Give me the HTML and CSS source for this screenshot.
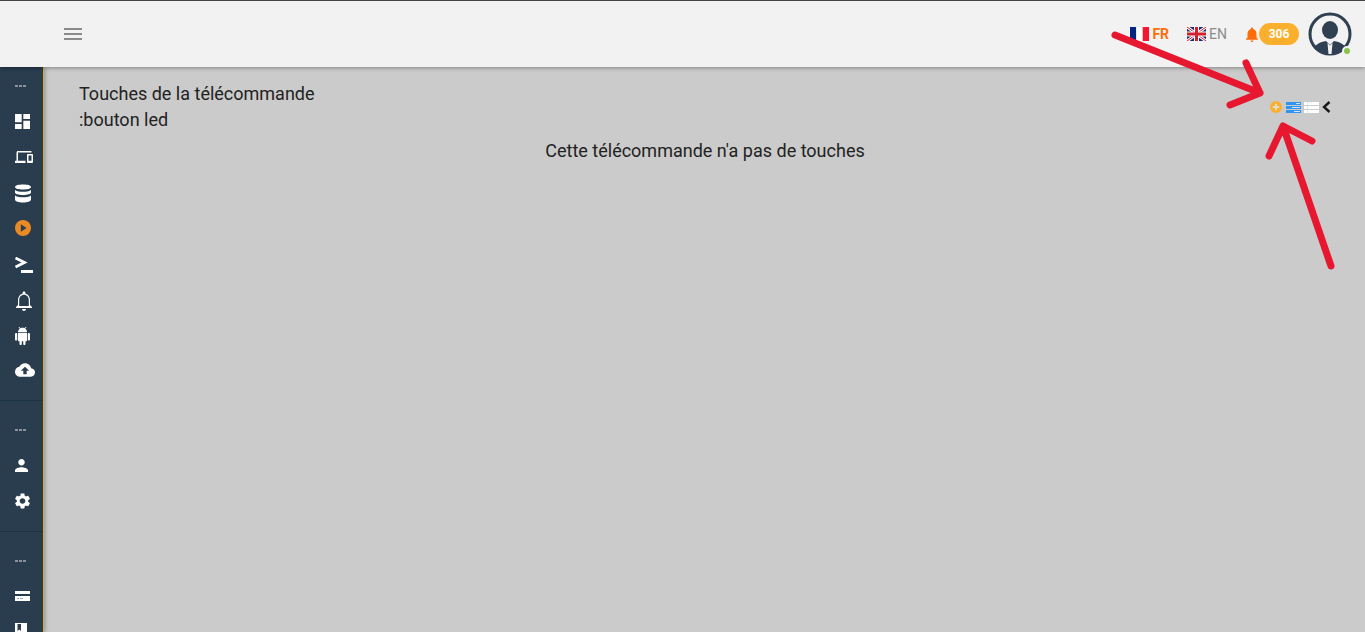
FILE: index.html
```html
<!DOCTYPE html>
<html lang="fr">
<head>
    <meta charset="UTF-8">
    <title>Touches de la télécommande</title>
    <link rel="stylesheet" href="styles.css">
</head>
<body>
    <header class="topbar">
        <svg class="burger" viewBox="0 0 18 12"><path d="M0 0h18v2H0zM0 5h18v2H0zM0 10h18v2H0z"/></svg>
        <div class="topbar-right">
            <a class="lang lang-active">
                <svg class="flag" viewBox="0 0 19 14"><rect width="6.3" height="14" fill="#00267f"/><rect x="6.3" width="6.4" height="14" fill="#fff"/><rect x="12.7" width="6.3" height="14" fill="#f31830"/></svg>
                FR
            </a>
            <a class="lang">
                <svg class="flag" viewBox="0 0 19 14"><rect width="19" height="14" fill="#1f2a6b"/><path d="M0 0l19 14M19 0L0 14" stroke="#fff" stroke-width="3"/><path d="M0 0l19 14M19 0L0 14" stroke="#d2202f" stroke-width="1"/><path d="M9.5 0v14M0 7h19" stroke="#fff" stroke-width="5"/><path d="M9.5 0v14M0 7h19" stroke="#d2202f" stroke-width="3"/></svg>
                EN
            </a>
            <div class="notif">
                <svg class="notif-bell" viewBox="4 2 16 20"><path d="M12 22c1.1 0 2-.9 2-2h-4c0 1.1.9 2 2 2zm6-6v-5c0-3.07-1.63-5.64-4.5-6.32V4c0-.83-.67-1.5-1.5-1.5s-1.5.67-1.5 1.5v.68C7.64 5.36 6 7.92 6 11v5l-2 2v1h16v-1l-2-2z"/></svg>
                <span class="badge">306</span>
            </div>
            <div class="avatar">
                <svg viewBox="0 0 44 44">
                    <circle cx="22" cy="22" r="20" fill="none" stroke="#2f4052" stroke-width="3"/>
                    <ellipse cx="22" cy="18" rx="8" ry="9" fill="#2f4052"/>
                    <path d="M6 36c1-3 6-6 12-7l4 4 4-4c6 1 11 4 12 7-4 4-10 7-16 7S10 40 6 36z" fill="#2f4052"/>
                    <path d="M19.500 31l2.500 2.500 2.500-2.500-1 11h-3z" fill="#f2f2f2"/>
                </svg>
                <span class="online"></span>
            </div>
        </div>
    </header>

    <div class="layout">
        <nav class="sidebar">
            <div class="side-group">
                <div class="side-item side-item-dots"><span class="dots"></span></div>
                <div class="side-item"><svg class="ico ico-15" viewBox="3 3 18 18"><path d="M3 13h8V3H3v10zm0 8h8v-6H3v6zm10 0h8V11h-8v10zm0-18v6h8V3h-8z"/></svg></div>
                <div class="side-item"><svg class="ico ico-18" viewBox="0 0 24 24"><path d="M4 6h18V4H4c-1.1 0-2 .9-2 2v11H0v3h14v-3H4V6zm19 2h-6c-.55 0-1 .45-1 1v10c0 .55.45 1 1 1h6c.55 0 1-.45 1-1V9c0-.55-.45-1-1-1zm-1 9h-4v-7h4v7z"/></svg></div>
                <div class="side-item"><svg class="ico ico-db" viewBox="1 0.500 16 19"><path d="M1 3.500C1 1.800 4.600 1 9 1s8 .8 8 2.500S13.400 6 9 6 1 5.200 1 3.500zM1 6.500C3 8 6 8.300 9 8.300s6-.3 8-1.800V9c0 1.500-3.600 2.500-8 2.500S1 10.500 1 9zM1 12c2 1.500 5 1.800 8 1.800s6-.3 8-1.800v4c0 1.800-3.600 3-8 3s-8-1.200-8-3z"/></svg></div>
                <div class="side-item side-item-play"><svg class="ico-16" viewBox="0 0 16 16"><circle cx="8" cy="8" r="8" fill="#e98a24"/><path d="M5.800 4.300L11.600 8l-5.800 3.700z" fill="#293d4f"/></svg></div>
                <div class="side-item"><svg class="ico ico-term" viewBox="0 0 18 16"><path d="M0.500 1l9 4.500-9 4.500" fill="none" stroke="#fff" stroke-width="2.800"/><path d="M6 13h12v3H6z"/></svg></div>
                <div class="side-item"><svg class="ico ico-bell" viewBox="4 2 16 20"><path d="M12 22c1.100 0 2-.9 2-2h-4c0 1.100.9 2 2 2zm6-6v-5c0-3.070-1.630-5.640-4.500-6.320V4c0-.83-.67-1.500-1.500-1.500s-1.500.67-1.500 1.500v.68C7.640 5.360 6 7.920 6 11v5l-2 2v1h16v-1l-2-2zm-1.200 1.100H7.200V11c0-2.900 1.900-5.300 4.800-5.300s4.800 2.400 4.800 5.300v6.100z"/></svg></div>
                <div class="side-item side-item-tight"><svg class="ico ico-droid" viewBox="2 0 20 24"><path d="M6 18c0 .55.45 1 1 1h1v3.500c0 .83.67 1.500 1.500 1.500s1.500-.67 1.500-1.500V19h2v3.500c0 .83.67 1.500 1.500 1.500s1.500-.67 1.500-1.500V19h1c.55 0 1-.45 1-1V8H6v10zM3.500 8C2.670 8 2 8.670 2 9.500v7c0 .83.67 1.500 1.500 1.500S5 17.330 5 16.500v-7C5 8.670 4.330 8 3.500 8zm17 0c-.83 0-1.500.67-1.500 1.500v7c0 .83.67 1.500 1.500 1.500s1.500-.67 1.500-1.500v-7c0-.83-.67-1.500-1.500-1.500zm-4.970-5.840l1.300-1.300c.2-.2.2-.51 0-.71-.2-.2-.51-.2-.71 0l-1.480 1.480C13.850 1.230 12.950 1 12 1c-.96 0-1.860.23-2.660.63L7.850.15c-.2-.2-.51-.2-.71 0-.2.2-.2.51 0 .71l1.310 1.310C6.970 3.260 6 5.010 6 7h12c0-1.990-.97-3.750-2.470-4.840z"/></svg></div>
                <div class="side-item side-item-tight"><svg class="ico ico-20" viewBox="0 0 24 24"><path d="M19.350 10.040C18.670 6.590 15.640 4 12 4 9.110 4 6.600 5.640 5.350 8.040 2.340 8.360 0 10.910 0 14c0 3.310 2.690 6 6 6h13c2.760 0 5-2.240 5-5 0-2.640-2.050-4.780-4.650-4.960zM14 13v4h-4v-4H7l5-5 5 5h-3z"/></svg></div>
            </div>
            <div class="side-group">
                <div class="side-item side-item-dots"><span class="dots"></span></div>
                <div class="side-item"><svg class="ico ico-13" viewBox="4 4 16 16"><path d="M12 12c2.210 0 4-1.790 4-4s-1.790-4-4-4-4 1.790-4 4 1.790 4 4 4zm0 2c-2.670 0-8 1.340-8 4v2h16v-2c0-2.660-5.330-4-8-4z"/></svg></div>
                <div class="side-item"><svg class="ico ico-gear" viewBox="2.500 2 19 20"><path d="M19.140 12.940c.04-.3.06-.61.06-.94 0-.32-.02-.64-.07-.94l2.030-1.580c.18-.14.23-.41.12-.61l-1.920-3.320c-.12-.22-.37-.29-.59-.22l-2.390.96c-.5-.38-1.030-.7-1.620-.94l-.36-2.540c-.04-.24-.24-.41-.48-.41h-3.840c-.24 0-.43.17-.47.41l-.36 2.540c-.59.24-1.130.57-1.620.94l-2.390-.96c-.22-.08-.47 0-.59.22L2.740 8.870c-.12.21-.08.47.12.61l2.030 1.580c-.05.3-.09.63-.09.94s.02.64.07.94l-2.030 1.580c-.18.14-.23.41-.12.61l1.920 3.320c.12.22.37.29.59.22l2.390-.96c.5.38 1.030.7 1.620.94l.36 2.540c.05.24.24.41.48.41h3.840c.24 0 .44-.17.47-.41l.36-2.540c.59-.24 1.130-.56 1.620-.94l2.390.96c.22.08.47 0 .59-.22l1.920-3.320c.12-.22.07-.47-.12-.61l-2.010-1.580zM12 15.600c-1.980 0-3.600-1.620-3.600-3.600s1.620-3.600 3.600-3.600 3.600 1.620 3.600 3.600-1.620 3.600-3.600 3.600z"/></svg></div>
            </div>
            <div class="side-group">
                <div class="side-item side-item-dots"><span class="dots"></span></div>
                <div class="side-item"><svg class="ico ico-card" viewBox="0 0 15 10"><path d="M0 0h15v3H0z"/><path d="M0 5h15v5H0z"/><path d="M2 7h2v1H2zM5 7h3v1H5z" fill="#9aa5af"/></svg></div>
                <div class="side-item side-item-book"><svg class="ico ico-book" viewBox="0 0 12 16"><path d="M0 0h12v16H0z"/><path d="M2.500 1h3.500v7L4.200 6.500 2.500 8z" fill="#293d4f"/></svg></div>
            </div>
        </nav>

        <main class="content">
            <div class="title-row">
                <div class="title">
                    <div>Touches de la télécommande</div>
                    <div>:bouton led</div>
                </div>
                <div class="tools">
                    <svg class="tool-add" viewBox="0 0 12 12"><circle cx="6" cy="6" r="6" fill="#fbb02d"/><path d="M5 2.800h2V5h2.200v2H7v2.200H5V7H2.800V5H5z" fill="#e3dccb"/></svg>
                    <svg class="tool-list" viewBox="0 0 15 11"><path d="M0 0h15v3H0zM0 4h15v3H0zM0 8h15v3H0z" fill="#2f94ee"/><path d="M10 1h4v1h-4zM6 5h8v1H6zM8 9h6v1H8z" fill="#cfe4f6"/></svg>
                    <svg class="tool-list" viewBox="0 0 15 11"><path d="M0 0h15v3H0zM0 4h15v3H0zM0 8h15v3H0z" fill="#fff"/><path d="M3 0h.7v11H3z" fill="#d8d8d8"/></svg>
                    <svg class="tool-back" viewBox="0 0 9 12"><path d="M7.500 1L2 6l5.500 5" fill="none" stroke="#1a1a1a" stroke-width="2.400"/></svg>
                </div>
            </div>
            <p class="message">Cette télécommande n'a pas de touches</p>
        </main>
    </div>

    <!-- fleches rouges ajoutees sur la capture -->
    <svg class="annotations" viewBox="0 0 1365 632">
        <path d="M1115 35L1260 93M1246 63L1260 93L1230 105"/>
        <path d="M1331 266L1283 126M1269 156L1283 126L1312 141"/>
    </svg>
</body>
</html>
```

FILE: styles.css
```css
* {
    box-sizing: border-box;
}
html, body {
    height: 100%;
}
body {
    margin: 0;
    height: 632px;
    overflow: hidden;
    display: flex;
    flex-direction: column;
    font-family: Roboto, "Liberation Sans", sans-serif;
    background-color: #cbcbcb;
    color: #222;
}
.topbar {
    flex: 0 0 67px;
    display: flex;
    align-items: center;
    justify-content: space-between;
    padding: 0 13px 0 64px;
    background-color: #f2f2f2;
    border-top: 1px solid #444;
    box-shadow: 0 1px 4px rgba(0, 0, 0, 0.35);
    position: relative;
    z-index: 2;
}
.burger {
    width: 18px;
    height: 12px;
    fill: #8a8a8a;
}
.topbar-right {
    display: flex;
    align-items: center;
}
.lang {
    display: flex;
    align-items: center;
    gap: 3px;
    margin-right: 18px;
    font-size: 14px;
    color: #8c8c8c;
}
.lang-active {
    font-weight: 700;
    color: #ff6d0a;
}
.flag {
    width: 19px;
    height: 14px;
}
.notif {
    display: flex;
    align-items: center;
    margin-right: 9px;
}
.notif-bell {
    width: 14px;
    height: 15px;
    fill: #ff6d0a;
}
.badge {
    width: 40px;
    height: 22px;
    line-height: 22px;
    text-align: center;
    border-radius: 11px;
    background-color: #fbb02d;
    color: #fff;
    font-size: 12px;
    font-weight: 700;
}
.avatar {
    width: 44px;
    height: 44px;
    position: relative;
}
.avatar svg {
    display: block;
    width: 44px;
    height: 44px;
}
.online {
    position: absolute;
    right: 0;
    bottom: 0;
    width: 10px;
    height: 10px;
    border-radius: 50%;
    background-color: #8bc34a;
    border: 2px solid #f2f2f2;
}
.layout {
    flex: 1;
    display: flex;
    min-height: 0;
}
.sidebar {
    flex: 0 0 44px;
    background-color: #293d4f;
    border-right: 1px solid #e0ac2c;
    box-shadow: 1px 0 4px rgba(0, 0, 0, 0.3);
    overflow: hidden;
}
.side-group {
    padding: 10px 0 12px;
    border-bottom: 1px solid #1b3347;
}
.side-group:first-child {
    padding: 0 0 13px;
}
.side-group:last-child {
    border-bottom: none;
}
.side-item {
    height: 36px;
    display: flex;
    align-items: center;
    padding-left: 15px;
}
.side-item-tight {
    height: 34px;
}
.side-item-dots {
    padding-top: 1px;
}
.side-item-play svg {
    margin-bottom: 2px;
}
.side-item-book {
    align-items: flex-start;
    padding-top: 9px;
}
.ico {
    fill: #fff;
    flex: none;
}
.ico-13 {
    width: 13px;
    height: 13px;
}
.ico-15 {
    width: 15px;
    height: 15px;
}
.ico-16 {
    width: 16px;
    height: 16px;
}
.ico-18 {
    width: 18px;
    height: 18px;
}
.ico-20 {
    width: 20px;
    height: 20px;
}
.ico-db {
    width: 16px;
    height: 19px;
}
.ico-term {
    width: 18px;
    height: 16px;
}
.ico-bell {
    width: 18px;
    height: 20px;
}
.ico-droid {
    width: 15px;
    height: 18px;
}
.ico-gear {
    width: 15px;
    height: 16px;
}
.ico-card {
    width: 15px;
    height: 10px;
}
.ico-book {
    width: 12px;
    height: 16px;
}
.dots {
    width: 11px;
    height: 2px;
    background: repeating-linear-gradient(90deg, #8a929b 0, #8a929b 3px, transparent 3px, transparent 4px);
}
.content {
    flex: 1;
    padding: 14px 34px 0 35px;
    font-size: 18px;
    line-height: 26px;
}
.title-row {
    display: flex;
    align-items: center;
    justify-content: space-between;
}
.tools {
    display: flex;
    align-items: center;
    gap: 3px;
}
.tool-add {
    width: 12px;
    height: 12px;
    margin-right: 1px;
}
.tool-list {
    width: 15px;
    height: 11px;
}
.tool-back {
    width: 9px;
    height: 12px;
}
.message {
    margin: 5px -34px 0 -35px;
    padding-left: 1px;
    text-align: center;
}
.annotations {
    position: absolute;
    top: 0;
    left: 0;
    width: 1365px;
    height: 632px;
    z-index: 3;
    pointer-events: none;
}
.annotations path {
    fill: none;
    stroke: #e6172f;
    stroke-width: 7;
    stroke-linecap: round;
    stroke-linejoin: round;
}
```
